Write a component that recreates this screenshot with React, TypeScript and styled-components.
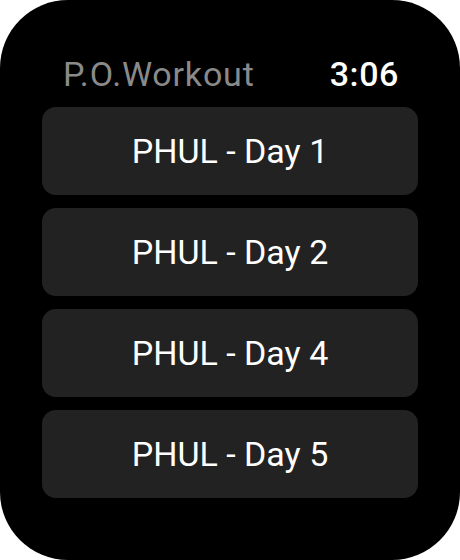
import React from "react";
import styled, { createGlobalStyle } from "styled-components";

const Global = createGlobalStyle`
  html, body { margin: 0; padding: 0; background: #ffffff; }
  * { box-sizing: border-box; }
`;

const Watch = styled.div`
  width: 460px;
  height: 560px;
  background: #000000;
  border-radius: 68px;
  padding: 52px 42px 0 42px;
  display: flex;
  flex-direction: column;
  font-family: Roboto, "Liberation Sans", sans-serif;
`;

const Header = styled.div`
  display: flex;
  justify-content: space-between;
  align-items: baseline;
  padding: 0 19px 0 21px;
  height: 55px;
`;

const Title = styled.span`
  color: #8a8a8a;
  font-size: 34px;
  line-height: 44px;
  letter-spacing: 0.8px;
`;

const Clock = styled.span`
  color: #ffffff;
  font-size: 34px;
  line-height: 44px;
  font-weight: 500;
  letter-spacing: 0.6px;
`;

const List = styled.div`
  display: flex;
  flex-direction: column;
  gap: 13px;
`;

const Item = styled.button`
  height: 88px;
  border: none;
  border-radius: 14px;
  background: #222222;
  color: #ffffff;
  font-family: inherit;
  font-size: 34px;
  display: flex;
  align-items: center;
  justify-content: center;
  padding: 0;
`;

const days = ["PHUL - Day 1", "PHUL - Day 2", "PHUL - Day 4", "PHUL - Day 5"];

export default function App() {
  return (
    <>
      <Global />
      <Watch>
        <Header>
          <Title>P.O.Workout</Title>
          <Clock>3:06</Clock>
        </Header>
        <List>
          {days.map((d) => (
            <Item key={d}>{d}</Item>
          ))}
        </List>
      </Watch>
    </>
  );
}
